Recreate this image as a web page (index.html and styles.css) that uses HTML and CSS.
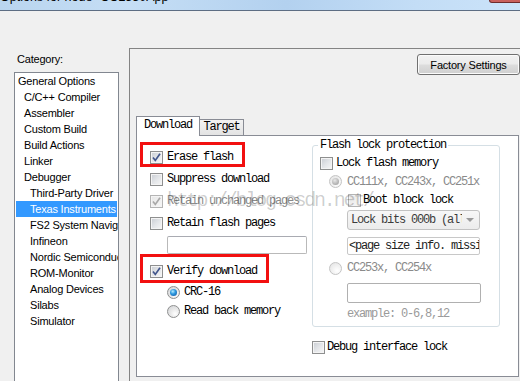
FILE: index.html
```html
<!DOCTYPE html>
<html lang="en">
<head>
    <meta charset="UTF-8">
    <title>Options for node "CC2530App"</title>
    <link rel="stylesheet" href="styles.css">
</head>
<body>
    <div class="titlebar">
        <span class="title">Options for node "CC2530App"</span>
        <span class="close"></span>
    </div>

    <div class="dialog">
        <div class="category">
            <div class="cat-label">Category:</div>
            <ul class="cat-list">
                <li>General Options</li>
                <li class="l1">C/C++ Compiler</li>
                <li class="l1">Assembler</li>
                <li class="l1">Custom Build</li>
                <li class="l1">Build Actions</li>
                <li class="l1">Linker</li>
                <li class="l1">Debugger</li>
                <li class="l2">Third-Party Driver</li>
                <li class="l2 selected">Texas Instruments</li>
                <li class="l2">FS2 System Navigator</li>
                <li class="l2">Infineon</li>
                <li class="l2">Nordic Semiconductor</li>
                <li class="l2">ROM-Monitor</li>
                <li class="l2">Analog Devices</li>
                <li class="l2">Silabs</li>
                <li class="l2">Simulator</li>
            </ul>
        </div>

        <div class="options">
            <div class="options-head">
                <button class="btn">Factory Settings</button>
            </div>

            <div class="tabs">
                <div class="tab active">Download</div>
                <div class="tab">Target</div>
            </div>

            <div class="panel">
                <div class="col-left">
                    <div class="row"><span class="cb"><svg viewBox="0 0 11 11"><path d="M2 5.4 L4.3 8.4 L9 1.8"/></svg></span>Erase flash</div>
                    <div class="row"><span class="cb"></span>Suppress download</div>
                    <div class="row dis"><span class="cb cb-dis"><svg viewBox="0 0 11 11"><path d="M2 5.4 L4.3 8.4 L9 1.8"/></svg></span>Retain unchanged pages</div>
                    <div class="row"><span class="cb"></span>Retain flash pages</div>
                    <div class="field field-pages"></div>
                    <div class="row row-verify"><span class="cb"><svg viewBox="0 0 11 11"><path d="M2 5.4 L4.3 8.4 L9 1.8"/></svg></span>Verify download</div>
                    <div class="row row-radio row-crc"><span class="rb on"></span>CRC-16</div>
                    <div class="row row-radio"><span class="rb"></span>Read back memory</div>
                </div>

                <div class="col-right">
                    <fieldset class="group">
                        <legend>Flash lock protection</legend>
                        <div class="grow"><span class="cb"></span>Lock flash memory</div>
                        <div class="grow grow-radio dis"><span class="rb rb-dis on"></span>CC111x, CC243x, CC251x</div>
                        <div class="grow grow-boot"><span class="cb cb-dis"></span>Boot block lock</div>
                        <div class="combo">
                            <span class="combo-text">Lock bits 000b (all pages)</span>
                            <span class="combo-arrow"></span>
                        </div>
                        <div class="field field-info">&lt;page size info. missing&gt;</div>
                        <div class="grow grow-radio grow-cc253 dis"><span class="rb rb-dis"></span>CC253x, CC254x</div>
                        <div class="field field-pages2"></div>
                        <div class="grow grow-example dis">example: 0-6,8,12</div>
                    </fieldset>
                    <div class="row row-debug"><span class="cb"></span>Debug interface lock</div>
                </div>

                <div class="mark mark-erase"></div>
                <div class="mark mark-verify"></div>
                <div class="watermark">http://blog.csdn.net/</div>
            </div>
        </div>
    </div>
</body>
</html>
```

FILE: styles.css
```css
* {
    box-sizing: border-box;
}
body {
    margin: 0;
    width: 520px;
    height: 381px;
    overflow: hidden;
    background-color: #f0f0f0;
    font-family: "Liberation Sans", Arial, sans-serif;
    font-size: 11px;
    color: #000;
}

/* Window title, cut at the top */
.titlebar {
    height: 11px;
    border-bottom: 1px solid #5d6d83;
    background: linear-gradient(90deg, #b9d5ef 0%, #c5def5 25%, #b3d1ef 55%, #c3ddf6 80%, #cbe3f9 100%);
    display: flex;
    justify-content: space-between;
    overflow: hidden;
}
.title {
    font-size: 12.5px;
    line-height: 12px;
    margin-top: -9px;
    white-space: nowrap;
}
.close {
    width: 33px;
    height: 3px;
    background: #c9605c;
    border: 1px solid #6e2b2b;
    border-top: none;
    border-radius: 0 0 4px 4px;
    margin-right: -2px;
}

.dialog {
    display: flex;
    padding-left: 14px;
}

/* Category list */
.category {
    width: 105px;
    flex: none;
}
.cat-label {
    margin-top: 41px;
    padding-left: 3px;
    line-height: 14px;
    letter-spacing: -0.2px;
}
.cat-list {
    list-style: none;
    margin: 6px 0 0;
    padding: 0;
    height: 309px;
    background: #fff;
    border: 1px solid #828790;
    border-bottom: none;
}
.cat-list li {
    height: 16px;
    line-height: 16px;
    padding-left: 3px;
    white-space: nowrap;
    overflow: hidden;
    letter-spacing: -0.2px;
}
.cat-list .l1 {
    padding-left: 9px;
}
.cat-list .l2 {
    padding-left: 15px;
}
.cat-list .selected {
    margin: 0 1px;
    padding-left: 14px;
    background: #3399ff;
    color: #fff;
}

/* Right side */
.options {
    width: 391px;
    height: 333px;
    flex: none;
    margin-left: 10px;
    margin-top: 37px;
    border-top: 1px solid #848484;
    border-left: 1px solid #848484;
}
.options-head {
    display: flex;
    justify-content: flex-end;
    padding-top: 5px;
}
.btn {
    width: 103px;
    height: 21px;
    padding: 0;
    border: 1px solid #707070;
    border-radius: 3px;
    background: linear-gradient(#f2f2f2 0%, #ebebeb 48%, #dddddd 52%, #cfcfcf 100%);
    box-shadow: inset 0 0 0 1px #fbfbfb;
    font-family: "Liberation Sans", Arial, sans-serif;
    font-size: 11px;
    letter-spacing: -0.2px;
    color: #000;
}

.tabs {
    display: flex;
    align-items: flex-end;
    margin-top: 41px;
    padding-left: 6px;
    height: 19px;
    font-family: "Liberation Mono", "Courier New", monospace;
    font-size: 12px;
    letter-spacing: -1.2px;
}
.tab {
    height: 16px;
    width: 44px;
    border: 1px solid #898c95;
    border-bottom: none;
    border-left: none;
    background: linear-gradient(#f2f2f2, #e3e3e3);
    text-align: center;
    line-height: 12px;
    padding-top: 1px;
}
.tab.active {
    width: 64px;
    height: 20px;
    margin-bottom: -1px;
    border-left: 1px solid #898c95;
    background: #fff;
    padding-top: 2px;
    position: relative;
    z-index: 1;
}

.panel {
    position: relative;
    margin-left: 6px;
    width: 383px;
    height: 242px;
    border: 1px solid #898c95;
    background: #fff;
    display: grid;
    grid-template-columns: 175px 188px;
    align-items: start;
    font-family: "Liberation Mono", "Courier New", monospace;
    font-size: 12px;
    letter-spacing: -1.2px;
    white-space: nowrap;
}

.col-left {
    padding: 10px 0 0 13px;
}
.row {
    display: flex;
    align-items: center;
    height: 22px;
}
.dis {
    color: #8a8a8a;
}
.row-verify {
    margin-top: 6px;
}
.row-radio {
    padding-left: 17px;
    height: 18px;
}
.row-crc {
    height: 20px;
}
.row-debug {
    margin-top: 11px;
    height: 18px;
}
.row-debug .cb {
    margin-right: 2px;
}

/* Checkbox and radio, Windows 7 look */
.cb {
    flex: none;
    width: 13px;
    height: 13px;
    margin-right: 4px;
    border: 1px solid #8e8f8f;
    background: linear-gradient(135deg, #c8ccd2 0%, #e3e5e8 50%, #f7f7f7 100%);
    box-shadow: inset 0 0 0 1px #f4f4f4;
}
.cb svg {
    display: block;
    width: 11px;
    height: 11px;
    fill: none;
    stroke: #42568c;
    stroke-width: 1.7;
}
.cb-dis {
    border-color: #b4b4b4;
    background: linear-gradient(135deg, #e6e6e6, #f7f7f7);
}
.cb-dis svg {
    stroke: #a8a8a8;
}
.rb {
    flex: none;
    position: relative;
    width: 13px;
    height: 13px;
    margin-right: 4px;
    border-radius: 50%;
    border: 1px solid #8e8f8f;
    background: radial-gradient(circle at 65% 70%, #ffffff 0%, #e8e8e8 45%, #cfd1d4 100%);
}
.rb.on::after {
    content: "";
    position: absolute;
    left: 2px;
    top: 2px;
    width: 7px;
    height: 7px;
    border-radius: 50%;
    background: radial-gradient(circle at 40% 35%, #b8ecff 0%, #2f9be0 40%, #0c4e9c 100%);
}
.rb-dis {
    border-color: #c4c4c4;
    background: radial-gradient(circle at 65% 70%, #ffffff 0%, #f0f0f0 50%, #e0e0e0 100%);
}
.rb-dis.on::after {
    background: radial-gradient(circle at 40% 35%, #e8e8e8 0%, #b5b5b5 60%, #9a9a9a 100%);
}

.field {
    height: 18px;
    border: 1px solid #b9b9b9;
    border-top-color: #a9abb2;
    border-radius: 2px;
    background: #fff;
    overflow: hidden;
}
.field-pages {
    width: 140px;
    margin: 2px 0 0 17px;
}

/* Flash lock group */
.group {
    margin: 2px 0 0;
    padding: 2px 0 2px 7px;
    min-width: 0;
    border: 1px solid #d5dfe5;
    border-radius: 3px;
}
.group legend {
    margin-left: -2px;
    padding: 0 2px;
    line-height: 14px;
}
.grow {
    display: flex;
    align-items: center;
    height: 18px;
}
.grow .cb {
    margin-right: 3px;
}
.grow-radio {
    height: 19px;
    padding-left: 9px;
}
.grow-radio .rb {
    margin-right: 5px;
}
.grow-boot {
    padding-left: 28px;
}
.grow-boot .cb {
    margin-right: 2px;
}
.grow-cc253 {
    margin-top: 4px;
    height: 18px;
}
.grow-example {
    height: 21px;
    padding-left: 27px;
    color: #9a9a9a;
}
.combo {
    display: flex;
    align-items: center;
    width: 133px;
    height: 20px;
    margin: 1px 0 0 27px;
    border: 1px solid #c2c2c2;
    border-radius: 3px;
    background: linear-gradient(#f7f7f7, #ececec);
    color: #3c3c3c;
}
.combo-text {
    width: 114px;
    padding-left: 3px;
    overflow: hidden;
}
.combo-arrow {
    margin-left: 4px;
    width: 0;
    height: 0;
    border-left: 4px solid transparent;
    border-right: 4px solid transparent;
    border-top: 4px solid #9a9a9a;
}
.field-info {
    width: 133px;
    margin: 7px 0 0 27px;
    padding-left: 1px;
    line-height: 16px;
    border-color: #c8c8c8;
    color: #222;
}
.field-pages2 {
    width: 134px;
    height: 20px;
    margin: 6px 0 0 27px;
    border-color: #b0b0b0;
}

/* Annotations drawn over the dialog */
.mark {
    position: absolute;
    border: 3px solid #f21010;
}
.mark-erase {
    left: 3px;
    top: 6px;
    width: 105px;
    height: 25px;
}
.mark-verify {
    left: 3px;
    top: 118px;
    width: 129px;
    height: 29px;
}
.watermark {
    position: absolute;
    left: 30px;
    top: 55px;
    font-size: 20px;
    line-height: 20px;
    letter-spacing: -2.2px;
    color: rgba(0, 0, 0, 0.2);
    pointer-events: none;
}
```
